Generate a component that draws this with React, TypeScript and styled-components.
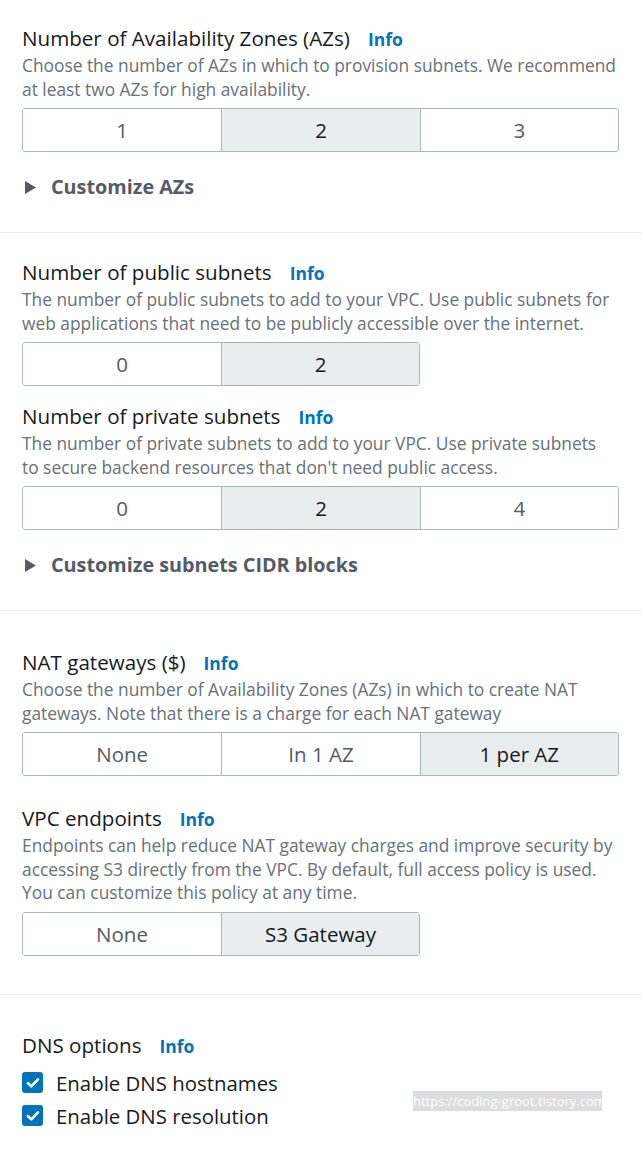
import styled, { createGlobalStyle } from "styled-components";

const Global = createGlobalStyle`
  body {
    margin: 0;
    background: #ffffff;
    font-family: "Open Sans", "Noto Sans", sans-serif;
    color: #16191f;
  }
`;

const Page = styled.div`
  position: relative;
  width: 642px;
  height: 1152px;
  overflow: hidden;
`;

const Section = styled.section<{ $top: number; $bottom: number; $last?: boolean }>`
  padding: ${(p) => p.$top}px 14px ${(p) => p.$bottom}px 22px;
  border-bottom: ${(p) => (p.$last ? "none" : "1px solid #eaeded")};
`;

const Field = styled.div<{ $gap?: number }>`
  margin-top: ${(p) => p.$gap ?? 0}px;
`;

const Label = styled.div`
  height: 26px;
  font-size: 20.6px;
  line-height: 26px;
  color: #16191f;
  white-space: nowrap;
`;

const Info = styled.span`
  display: inline-block;
  margin-left: 18px;
  font-size: 17.5px;
  line-height: 1;
  font-weight: 700;
  color: #0073bb;
`;

const Desc = styled.p<{ $max?: number }>`
  margin: 3px 0 0;
  max-width: ${(p) => (p.$max ? `${p.$max}px` : "none")};
  font-size: 17.35px;
  line-height: 23.5px;
  color: #687078;
`;

const Segments = styled.div<{ $cols: number }>`
  display: grid;
  grid-template-columns: repeat(${(p) => p.$cols}, 1fr);
  width: ${(p) => p.$cols * 199}px;
  margin-top: 7px;
  border: 1px solid #aab7b8;
  border-radius: 3px;
  overflow: hidden;
  box-sizing: border-box;
`;

const Segment = styled.div<{ $on?: boolean }>`
  height: 42px;
  display: flex;
  align-items: center;
  justify-content: center;
  font-size: 20.5px;
  color: ${(p) => (p.$on ? "#16191f" : "#545b64")};
  background: ${(p) => (p.$on ? "#eaeded" : "#ffffff")};
  border-left: 1px solid #aab7b8;
  &:first-child {
    border-left: none;
  }
`;

const Expander = styled.div`
  display: flex;
  align-items: center;
  gap: 14px;
  height: 26px;
  margin-top: 22px;
  padding-left: 2px;
  font-size: 19.8px;
  line-height: 26px;
  font-weight: 700;
  color: #545b64;
`;

const Caret = () => (
  <svg width="13" height="15" viewBox="0 0 13 15">
    <path d="M1 1 L12 7.5 L1 14 Z" fill="#545b64" />
  </svg>
);

const CheckRow = styled.label<{ $gap: number }>`
  display: flex;
  align-items: center;
  gap: 13px;
  height: 26px;
  margin-top: ${(p) => p.$gap}px;
  font-size: 20.4px;
  line-height: 26px;
  color: #16191f;
`;

const Box = styled.span`
  width: 21px;
  height: 21px;
  border-radius: 3px;
  background: #0073bb;
  display: flex;
  align-items: center;
  justify-content: center;
`;

const Watermark = styled.div`
  position: absolute;
  left: 413px;
  top: 1091px;
  width: 189px;
  height: 20px;
  background: #dddddd;
  color: #ffffff;
  font-size: 13px;
  line-height: 20px;
  text-align: center;
  white-space: nowrap;
`;

function Seg({ items, on }: { items: string[]; on: number }) {
  return (
    <Segments $cols={items.length}>
      {items.map((t, i) => (
        <Segment key={t} $on={i === on}>
          {t}
        </Segment>
      ))}
    </Segments>
  );
}

function Check({ label, gap }: { label: string; gap: number }) {
  return (
    <CheckRow $gap={gap}>
      <Box>
        <svg width="14" height="12" viewBox="0 0 14 12">
          <path d="M2 6.2 L5.4 9.4 L12 2.4" stroke="#fff" strokeWidth="2.6" fill="none" strokeLinecap="round" strokeLinejoin="round" />
        </svg>
      </Box>
      {label}
    </CheckRow>
  );
}

export default function App() {
  return (
    <Page>
      <Global />
      <Section $top={25} $bottom={32}>
        <Label>
          Number of Availability Zones (AZs)<Info>Info</Info>
        </Label>
        <Desc>
          Choose the number of AZs in which to provision subnets. We recommend at least two AZs for high availability.
        </Desc>
        <Seg items={["1", "2", "3"]} on={1} />
        <Expander>
          <Caret />
          Customize AZs
        </Expander>
      </Section>

      <Section $top={26} $bottom={32}>
        <Label>
          Number of public subnets<Info>Info</Info>
        </Label>
        <Desc>
          The number of public subnets to add to your VPC. Use public subnets for web applications that need to be publicly accessible over the internet.
        </Desc>
        <Seg items={["0", "2"]} on={1} />
        <Field $gap={17}>
          <Label>
            Number of private subnets<Info>Info</Info>
          </Label>
          <Desc $max={590}>
            The number of private subnets to add to your VPC. Use private subnets to secure backend resources that don't need public access.
          </Desc>
          <Seg items={["0", "2", "4"]} on={1} />
        </Field>
        <Expander>
          <Caret />
          Customize subnets CIDR blocks
        </Expander>
      </Section>

      <Section $top={38} $bottom={38}>
        <Label>
          NAT gateways ($)<Info>Info</Info>
        </Label>
        <Desc>
          Choose the number of Availability Zones (AZs) in which to create NAT gateways. Note that there is a charge for each NAT gateway
        </Desc>
        <Seg items={["None", "In 1 AZ", "1 per AZ"]} on={2} />
        <Field $gap={29}>
          <Label>
            VPC endpoints<Info>Info</Info>
          </Label>
          <Desc>
            Endpoints can help reduce NAT gateway charges and improve security by accessing S3 directly from the VPC. By default, full access policy is used. You can customize this policy at any time.
          </Desc>
          <Seg items={["None", "S3 Gateway"]} on={1} />
        </Field>
      </Section>

      <Section $top={37} $bottom={0} $last>
        <Label>
          DNS options<Info>Info</Info>
        </Label>
        <Check label="Enable DNS hostnames" gap={12} />
        <Check label="Enable DNS resolution" gap={7} />
      </Section>

      <Watermark>https://coding-groot.tistory.com</Watermark>
    </Page>
  );
}
